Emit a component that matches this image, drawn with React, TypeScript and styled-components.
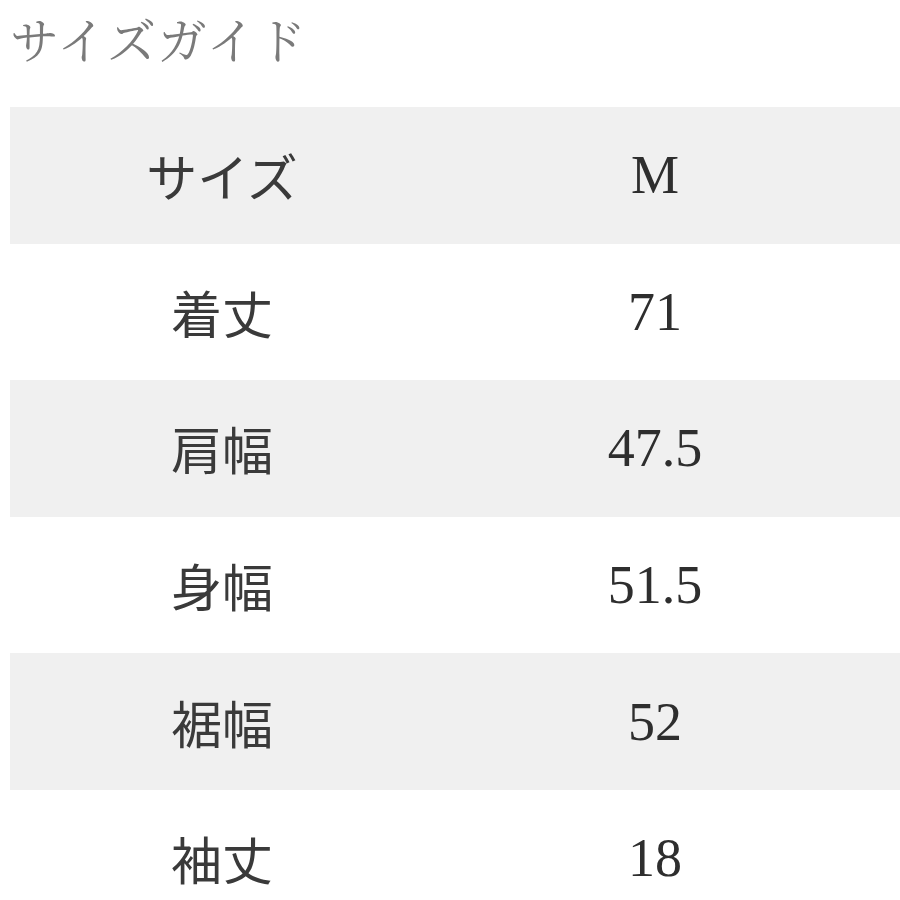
import * as React from "react";
import styled, { createGlobalStyle } from "styled-components";

const GlobalStyle = createGlobalStyle`
  html, body {
    margin: 0;
    padding: 0;
    background: #ffffff;
  }
`;

const Page = styled.div`
  width: 900px;
  height: 900px;
  overflow: hidden;
  padding-left: 10px;
  box-sizing: border-box;
`;

const Title = styled.h1`
  margin: 0;
  height: 76px;
  line-height: 76px;
  font-family: "Noto Serif CJK JP", "Liberation Serif", "Noto Sans CJK JP", serif;
  font-weight: 400;
  font-size: 49px;
  letter-spacing: 1.5px;
  color: #7a7a7a;
  margin-bottom: 31px;
`;

const Table = styled.div`
  display: flex;
  flex-direction: column;
`;

const Row = styled.div<{ $shaded: boolean }>`
  display: grid;
  grid-template-columns: 424px 442px;
  height: 136.6px;
  align-items: center;
  background: ${(p) => (p.$shaded ? "#f0f0f0" : "#ffffff")};
`;

const Label = styled.div`
  text-align: center;
  font-family: "Noto Sans CJK JP", sans-serif;
  font-size: 51px;
  font-weight: 400;
  color: #3a3a3a;
`;

const Value = styled.div`
  text-align: center;
  font-family: "Liberation Serif", serif;
  font-size: 54px;
  color: #2e2e2e;
`;

const rows: [string, string][] = [
  ["サイズ", "M"],
  ["着丈", "71"],
  ["肩幅", "47.5"],
  ["身幅", "51.5"],
  ["裾幅", "52"],
  ["袖丈", "18"],
];

export default function App() {
  return (
    <Page>
      <GlobalStyle />
      <Title>サイズガイド</Title>
      <Table>
        {rows.map(([label, value], i) => (
          <Row key={label} $shaded={i % 2 === 0}>
            <Label>{label}</Label>
            <Value>{value}</Value>
          </Row>
        ))}
      </Table>
    </Page>
  );
}
